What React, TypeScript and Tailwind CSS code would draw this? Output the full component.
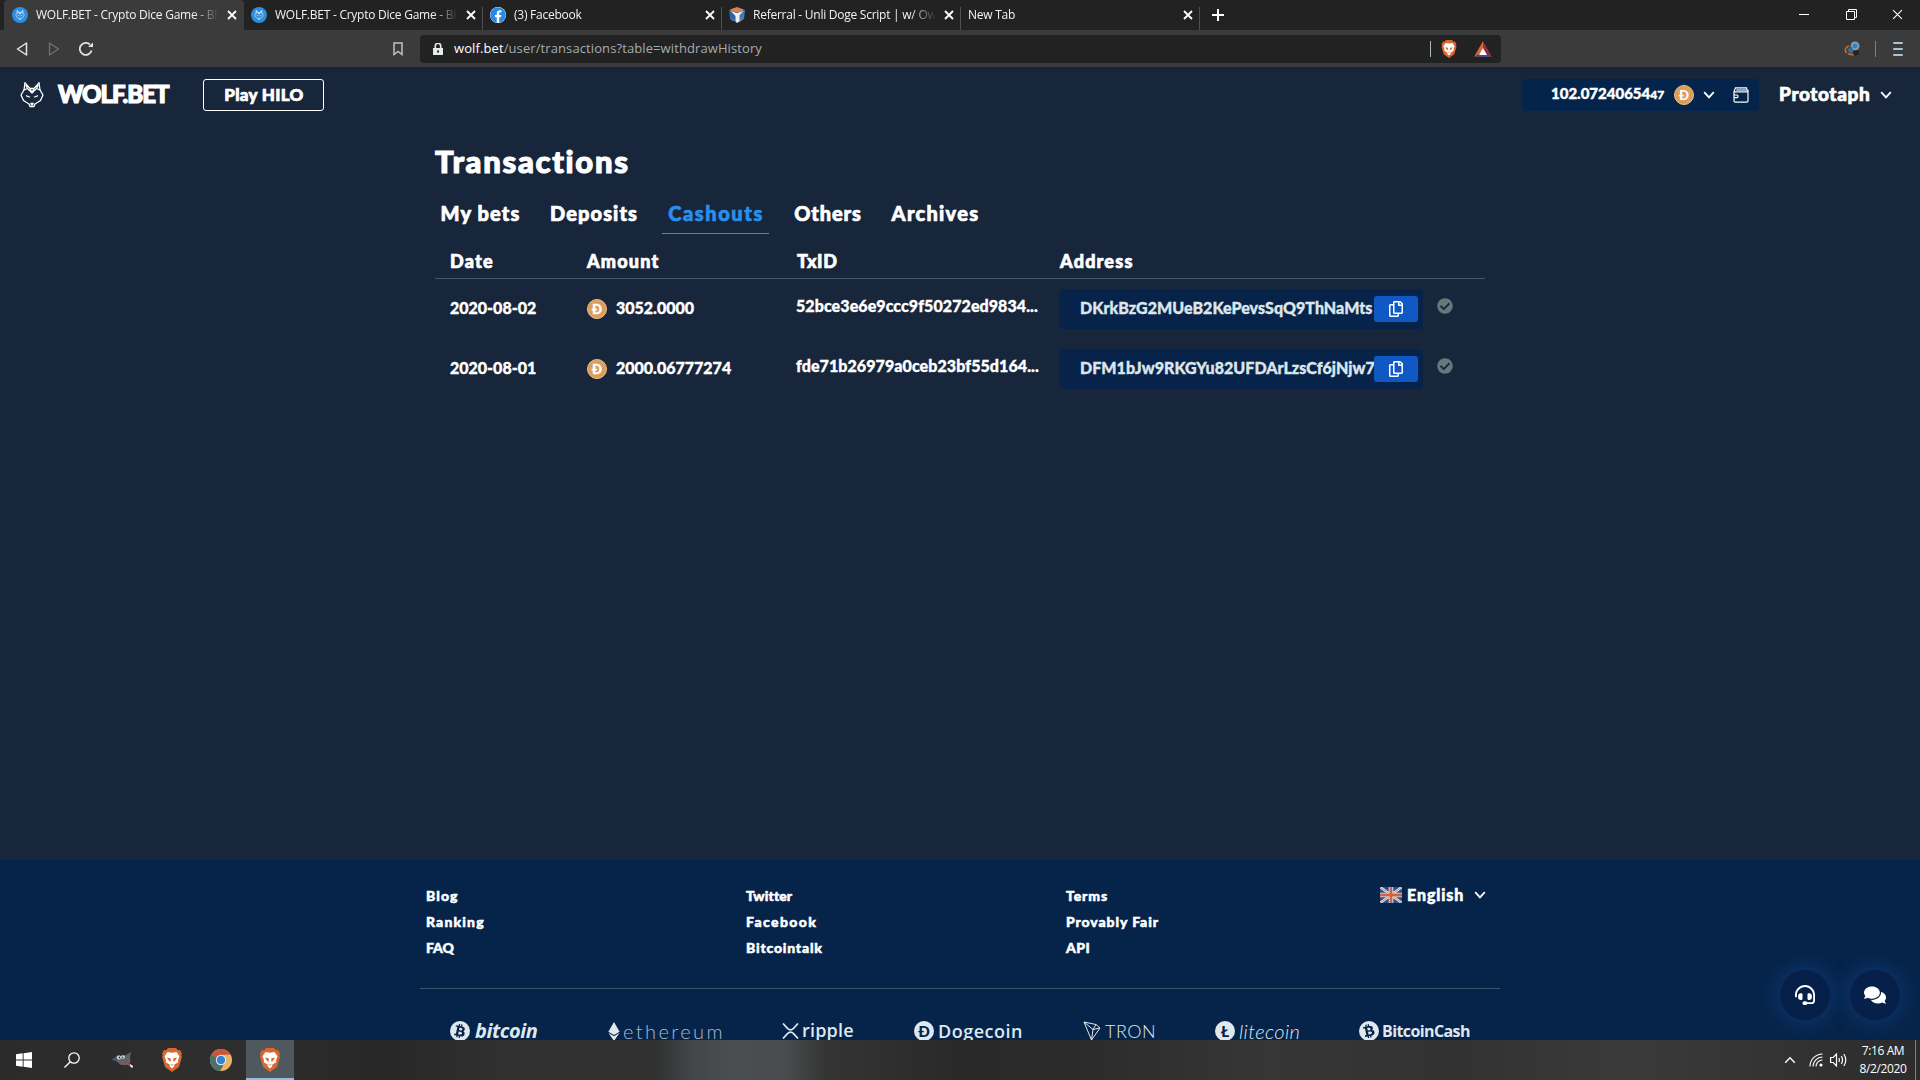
import type { ReactNode } from "react"
import { FaCheckCircle, FaComments, FaEthereum, FaFacebook, FaRegCopy } from "react-icons/fa"
import { FaBtc, FaHeadset } from "react-icons/fa6"

const tabs = [
  { id: 1, title: "WOLF.BET - Crypto Dice Game - Bi", icon: "wolf", active: true },
  { id: 2, title: "WOLF.BET - Crypto Dice Game - Bi", icon: "wolf" },
  { id: 3, title: "(3) Facebook", icon: "facebook" },
  { id: 4, title: "Referral - Unli Doge Script | w/ Ow", icon: "cube" },
  { id: 5, title: "New Tab", icon: "" },
]

const sections = [
  { label: "My bets", className: "w-[90px] pl-px tracking-[1.1px]" },
  { label: "Deposits", className: "w-[97px] pl-px tracking-[1.1px]" },
  { label: "Cashouts", className: "w-[107px] pl-px tracking-[1.6px] text-[#2a8fec]", active: true },
  { label: "Others", className: "w-[77px] pl-px tracking-[0.9px]" },
  { label: "Archives", className: "w-[98px] pl-px tracking-[1.3px]" },
]

const rows = [
  {
    date: "2020-08-02",
    amount: "3052.0000",
    txid: "52bce3e6e9ccc9f50272ed9834...",
    address: "DKrkBzG2MUeB2KePevsSqQ9ThNaMts",
  },
  {
    date: "2020-08-01",
    amount: "2000.06777274",
    txid: "fde71b26979a0ceb23bf55d164...",
    address: "DFM1bJw9RKGYu82UFDArLzsCf6jNjw7",
  },
]

const footerLinks = [
  [
    { label: "Blog", className: "tracking-[1.1px]" },
    { label: "Ranking", className: "tracking-[1.15px]" },
    { label: "FAQ", className: "" },
  ],
  [
    { label: "Twitter", className: "tracking-[0.1px]" },
    { label: "Facebook", className: "tracking-[1.4px]" },
    { label: "Bitcointalk", className: "tracking-[0.8px]" },
  ],
  [
    { label: "Terms", className: "tracking-[0.9px]" },
    { label: "Provably Fair", className: "tracking-[0.9px]" },
    { label: "API", className: "tracking-[0.4px]" },
  ],
]

function WolfIcon({ className }: { className?: string }) {
  return (
    <svg
      className={className}
      viewBox="0 0 24 26"
      fill="none"
      stroke="currentColor"
      strokeWidth="1.3"
      strokeLinejoin="round"
      strokeLinecap="round"
    >
      <path d="M5 1 4 8 1 13l2.500 5.500L9 22l1 2.500h4l1-2.500 5.500-3.500L23 13l-3-5-1-7" />
      <path d="m5 1 5 5.500h4L19 1M4 8l3.500-1.500L12 11l4.500-4.500L20 8M6 3.500l1.500 3M18 3.500l-1.500 3M10 6.500l2 4.500 2-4.500" />
      <path d="m6.500 13.800 3 1.200M17.500 13.800l-3 1.200M10.800 21.500h2.400L12 23z" />
    </svg>
  )
}

function WolfBadge() {
  return (
    <span className="flex size-4 shrink-0 items-center justify-center rounded-full bg-[#2b8ee0] text-white">
      <WolfIcon className="size-2.5" />
    </span>
  )
}

function CubeIcon() {
  return (
    <svg className="size-4 shrink-0" viewBox="0 0 16 16">
      <path d="M0 3 8 0l8 3-8 3z" fill="#d9825a" />
      <path d="M0 3l8 3v10l-7-4z" fill="#2c62a8" />
      <path d="M16 3 8 6v10l7-4z" fill="#3d7cc4" />
      <path d="M1.500 3.800 8 6.200l6.500-2.400-4 4.500V14L8 16l-1.500-2V9z" fill="#f0f0f0" />
      <path d="M3 2l3-1 4 1.500-3 1zM1 11l4 2.500L4 14zM15 11l-5 3v1.500z" fill="#d9825a" />
    </svg>
  )
}

function BraveIcon({ className }: { className?: string }) {
  return (
    <svg className={className} viewBox="0 0 20 24">
      <path d="M6 0h8l2 2.300 2-.3 2 3.500-.7 2L20 9l-3 10-7 5-7-5L0 9l.7-1.500L0 5.500 2 2l2 .3z" fill="#d9652f" />
      <path
        d="m5.500 4 4.500.8 4.500-.8 3 4.300-1.500 4 .3 2-3.800 2.200-.5.800.5.700L10 20.500 7.500 18l.5-.7-.5-.8-3.800-2.200.3-2-1.500-4z"
        fill="#fff"
      />
      <path d="M5 9.500l3.500.7.4 2.500-.9 1-1.500-1.700zM15 9.500l-3.500.7-.4 2.500.9 1 1.500-1.700zM8 16l2 .8 2-.8-2 1.800z" fill="#d9652f" />
    </svg>
  )
}

function ChromeIcon() {
  return (
    <svg className="size-[22px]" viewBox="0 0 22 22">
      <circle cx="11" cy="11" r="11" fill="#e9b463" />
      <path d="M11 11 1.500 5.500A11 11 0 0 1 20.500 5.500L11 6z" fill="#c9573a" />
      <path d="M1.500 5.500A11 11 0 0 0 10 22l5-8.500L11 11z" fill="#4b6f6b" />
      <circle cx="11" cy="11" r="5.200" fill="#eee" />
      <circle cx="11" cy="11" r="4.200" fill="#2d85d8" />
    </svg>
  )
}

function GimpIcon() {
  return (
    <svg className="h-4 w-[22px]" viewBox="0 0 22 16">
      <path d="M3 5l3-2 4 1 4-1 5-3-1 6 .5 4-3.500 3H9L4 9z" fill="#5f6467" />
      <path d="M0 7l4-2 2 3-4 1z" fill="#3f6074" />
      <circle cx="7" cy="5.500" r="2" fill="#e8eef0" />
      <circle cx="11" cy="5" r="1.800" fill="#e8eef0" />
      <circle cx="7.400" cy="5.500" r=".9" fill="#222" />
      <circle cx="10.800" cy="5.200" r=".8" fill="#222" />
      <path d="M9 10l8 1 4 3-2 1-4-2.500-6-1z" fill="#a44a4a" />
      <path d="M18 12l3 2-.5 2-2-1z" fill="#e8eef0" />
    </svg>
  )
}

function Chevron({ className }: { className?: string }) {
  return (
    <svg className={className} viewBox="0 0 12 8" fill="none" stroke="currentColor">
      <path d="M1.200 1.200 6 6.300l4.800-5.100" />
    </svg>
  )
}

function CloseIcon({ className }: { className?: string }) {
  return (
    <svg className={className} viewBox="0 0 10 10" fill="none" stroke="currentColor">
      <path d="m1 1 8 8M9 1 1 9" />
    </svg>
  )
}

function DogeCoin() {
  return (
    <span className="flex size-5 shrink-0 items-center justify-center rounded-full border border-[#f0c08c] bg-[#dc9c5a] text-[13px] font-black leading-none text-white">
      Ð
    </span>
  )
}

function UkFlag() {
  return (
    <svg className="h-4 w-[22px]" viewBox="0 0 22 16">
      <path d="M0 0h22v16H0z" fill="#1f4f9c" />
      <path d="m0 0 22 16M22 0 0 16" stroke="#e8e8e8" strokeWidth="2.600" />
      <path d="m0 0 22 16M22 0 0 16" stroke="#d0623f" strokeWidth=".8" />
      <path d="M11 0v16M0 8h22" stroke="#e8e8e8" strokeWidth="4.600" />
      <path d="M11 0v16M0 8h22" stroke="#d0623f" strokeWidth="2.800" />
    </svg>
  )
}

function TabStrip() {
  return (
    <div className="flex h-[30px] shrink-0 bg-[#222222] pl-1">
      {tabs.map((tab) => (
        <div
          key={tab.id}
          className={tab.active ? "flex w-[240px] rounded-t bg-[#3b3b3b] pl-px" : "flex w-[239px]"}
        >
          <div className="flex min-w-0 flex-1 items-center gap-2 pl-[7px] pr-1.5">
            {tab.icon === "wolf" && <WolfBadge />}
            {tab.icon === "facebook" && <FaFacebook className="size-4 shrink-0 rounded-full bg-white text-[#2489e8]" />}
            {tab.icon === "cube" && <CubeIcon />}
            <span className="min-w-0 flex-1 whitespace-nowrap font-['Open_Sans',sans-serif] text-[12px] tracking-[-0.25px] text-[#f2f2f2] [mask-image:linear-gradient(90deg,#000_86%,transparent_100%)]">
              {tab.title}
            </span>
            <CloseIcon className="size-2.5 shrink-0 stroke-[1.8] text-white" />
          </div>
          <div className={tab.active ? "w-px" : "h-[23px] w-px self-end bg-[#505050]"} />
        </div>
      ))}
      <svg className="ml-3 mt-[9px] size-3 text-white" viewBox="0 0 12 12" stroke="currentColor" strokeWidth="2">
        <path d="M6 0v12M0 6h12" />
      </svg>
      <div className="ml-auto flex items-center gap-9 pb-0.5 pr-[17px] text-white">
        <div className="mr-px h-px w-2.5 bg-white" />
        <svg className="size-[11px]" viewBox="0 0 11 11" fill="none" stroke="currentColor">
          <path d="M.5 2.500h8v8h-8zM2.500 2.500v-2h8v8h-2" />
        </svg>
        <CloseIcon className="-ml-px size-[11px]" />
      </div>
    </div>
  )
}

function Toolbar() {
  return (
    <div className="flex h-[37px] shrink-0 items-center bg-[#3b3b3b] text-[#dfe6e8]">
      <svg className="ml-4 h-[14px] w-3" viewBox="0 0 12 14" fill="none" stroke="currentColor" strokeWidth="1.500" strokeLinejoin="round">
        <path d="M10.500 1v12L1.500 7z" />
      </svg>
      <svg className="ml-5 h-[14px] w-3 text-[#6c7472]" viewBox="0 0 12 14" fill="none" stroke="currentColor" strokeWidth="1.300" strokeLinejoin="round">
        <path d="M1.500 1v12l9-6z" />
      </svg>
      <svg className="ml-[19px] size-[14px]" viewBox="0 0 14 14" fill="none" stroke="currentColor" strokeWidth="1.800">
        <path d="M12.600 8.500A6 6 0 1 1 11 2.600" />
        <path d="M9 5h5V.500z" fill="currentColor" stroke="none" />
      </svg>
      <svg className="ml-[300px] h-[14px] w-2.5 text-[#b4c6ce]" viewBox="0 0 10 14" fill="none" stroke="currentColor" strokeWidth="1.500">
        <path d="M1 1h8v11.500L5 9.500l-4 3z" />
      </svg>
      <div className="ml-[17px] flex h-7 w-[1081px] items-center rounded bg-[#222222] pl-3 font-['Open_Sans',sans-serif]">
        <svg className="ml-px h-3 w-2.5" viewBox="0 0 10 12">
          <path d="M0 5h10v7H0z" fill="#e6ecee" />
          <path d="M2.300 5V3a2.700 2.700 0 0 1 5.400 0v2" fill="none" stroke="#e6ecee" strokeWidth="1.600" />
          <path d="M4 7.500h2v2H4z" fill="#222" />
        </svg>
        <span className="ml-[11px] text-[13px] tracking-[0.1px] text-[#a4acb0]">
          <span className="text-white">wolf.bet</span>/user/transactions?table=withdrawHistory
        </span>
        <div className="ml-auto h-4 w-px bg-[#a9bdc8]" />
        <BraveIcon className="ml-[10px] h-[18px] w-4" />
        <svg className="ml-[17px] mr-[9px] h-4 w-[18px]" viewBox="0 0 18 16">
          <path d="M9 0 0 16l9-5z" fill="#d9652f" />
          <path d="M9 0v11l9 5z" fill="#8f2f45" />
          <path d="M0 16l9-5 9 5z" fill="#4b4a86" />
          <path d="M9 7l4 7H5z" fill="#fff" />
        </svg>
      </div>
      <svg className="ml-auto h-4 w-[17px]" viewBox="0 0 17 16">
        <circle cx="11" cy="5" r="4.500" fill="#7f9bb4" />
        <circle cx="11" cy="5" r="2.200" fill="#2f7fc4" />
        <path d="M5 5c-4 1-5 5-2 7M4 13l6 1" fill="none" stroke="#c96b3a" strokeWidth="1.500" />
        <path d="M3 8l5-2 2 5-4 2z" fill="#3a6a94" />
        <path d="M9 10l6-1v4l-5 2z" fill="#222" />
      </svg>
      <div className="ml-[14px] h-4 w-px bg-[#6f8885]" />
      <div className="ml-[17px] mr-[17px] flex flex-col gap-1">
        <div className="h-0.5 w-2.5 rounded bg-[#a9c3d0]" />
        <div className="h-0.5 w-2.5 rounded bg-[#a9c3d0]" />
        <div className="h-0.5 w-2.5 rounded bg-[#a9c3d0]" />
      </div>
    </div>
  )
}

function SiteHeader() {
  return (
    <header className="flex h-14 shrink-0 items-center font-black [-webkit-text-stroke:0.7px_currentColor]">
      <WolfIcon className="ml-5 h-[26px] w-6" />
      <span className="ml-3.5 w-[113px] pb-0.5 text-[24px] leading-none tracking-[-1px] [-webkit-text-stroke:1.2px_currentColor]">
        WOLF.BET
      </span>
      <button className="ml-8 h-8 w-[121px] rounded-[3px] border border-white pb-px pl-px text-[17px] leading-none tracking-[0.3px]">
        Play HILO
      </button>
      <div className="ml-auto flex h-8 w-[237px] items-center rounded-sm bg-[#05244c] pl-[29px]">
        <span className="w-[113px] whitespace-nowrap pb-[3px] text-[15px] leading-none [-webkit-text-stroke:0.4px_currentColor]">
          102.07240654<span className="text-[12px]">47</span>
        </span>
        <span className="ml-[10px] [-webkit-text-stroke:0px]">
          <DogeCoin />
        </span>
        <Chevron className="ml-[9px] h-2 w-3 stroke-[1.9]" />
        <svg className="ml-[18px] h-4 w-4" viewBox="0 0 16 16" fill="none" stroke="currentColor" strokeWidth="1.200">
          <path d="M2.500.8h11l.5 2.500h1v10.500q0 1.400-1.400 1.400H2.400Q1 15.200 1 13.800V4.500zM1 4.800h14M1 8h3q1 0 1 1.300T4 10.600H1" />
          <path d="M3.500 1.500h9.500v2.800H3z" fill="#8fa5bd" stroke="none" />
        </svg>
      </div>
      <span className="ml-5 w-[92px] pb-[3px] text-[19px] leading-none tracking-[0.6px]">Prototaph</span>
      <Chevron className="ml-[9px] mr-7 h-2 w-3 stroke-[1.9]" />
    </header>
  )
}

function Transactions() {
  return (
    <main className="mx-auto w-[1050px] flex-1 pt-[18px] font-black [-webkit-text-stroke:0.7px_currentColor]">
      <h1 className="text-[31px] leading-10 tracking-[1.7px] [-webkit-text-stroke:1.1px_currentColor]">Transactions</h1>
      <nav className="mt-3 flex h-[41px] gap-5 text-[20px] leading-10">
        {sections.map((section) => (
          <a key={section.label} className={`whitespace-nowrap text-center ${section.className}`}>
            {section.label}
            {section.active && <span className="-ml-px block h-px bg-[#2a8fec]" />}
          </a>
        ))}
      </nav>
      <div className="grid h-[45px] grid-cols-[151px_210px_263px_364px_1fr] items-center border-b border-[#46566d] pt-[9px] text-[18px] leading-none tracking-[1.2px]">
        <span className="pl-[15px]">Date</span>
        <span className="pl-px">Amount</span>
        <span className="pl-px tracking-[0.6px]">TxID</span>
        <span className="pl-px">Address</span>
      </div>
      {rows.map((row) => (
        <div
          key={row.txid}
          className="grid h-[60px] grid-cols-[151px_210px_263px_364px_1fr] items-center text-[16px] leading-none [-webkit-text-stroke:0.35px_currentColor]"
        >
          <span className="pb-0.5 pl-[15px]">{row.date}</span>
          <span className="flex items-center gap-[9px] pl-px">
            <DogeCoin />
            <span className="pb-0.5">{row.amount}</span>
          </span>
          <span className="pb-1.5 tracking-[0.08px]">{row.txid}</span>
          <div className="flex h-10 items-center rounded-sm bg-[#08234a] pl-[21px]">
            <span className="w-[294px] whitespace-nowrap pb-0.5 leading-5 tracking-[0.05px] text-[#dde6ea]">
              {row.address}
            </span>
            <button className="flex h-[26px] w-11 items-center justify-center rounded-[3px] bg-[#1058c4]">
              <FaRegCopy className="size-4" />
            </button>
          </div>
          <span className="pb-1.5 pl-[14px]">
            <FaCheckCircle className="size-4 text-[#637a7a]" />
          </span>
        </div>
      ))}
    </main>
  )
}

function CoinLogo({ className, children }: { className: string; children: ReactNode }) {
  return <div className={`flex h-[22px] items-center whitespace-nowrap leading-none ${className}`}>{children}</div>
}

function CoinMark({ children }: { children: ReactNode }) {
  return (
    <span className="flex size-5 shrink-0 items-center justify-center rounded-full bg-[#dfe8ec] text-[15px] font-black text-[#06244a]">
      {children}
    </span>
  )
}

function Footer() {
  return (
    <footer className="h-[180px] shrink-0 overflow-hidden bg-[#06244a]">
      <div className="mx-auto w-[1080px]">
        <div className="flex h-[129px] border-b border-[#3c516b] pt-[23px] text-[14px] font-black leading-[26px] [-webkit-text-stroke:0.5px_currentColor]">
          {footerLinks.map((links) => (
            <ul key={links[0].label} className="w-80 pl-1.5">
              {links.map((link) => (
                <li key={link.label} className={link.className}>
                  {link.label}
                </li>
              ))}
            </ul>
          ))}
          <div className="-mt-px flex h-[26px] items-center text-[16px]">
            <UkFlag />
            <span className="ml-[5px] w-[58px] tracking-[0.9px]">English</span>
            <Chevron className="ml-[9px] h-2 w-3 stroke-[1.9]" />
          </div>
        </div>
        <div className="flex pl-[30px] pt-[31px] text-[#dfe8ec]">
          <CoinLogo className="w-[158px] gap-[5px]">
            <CoinMark>
              <FaBtc className="size-3.5 rotate-12" />
            </CoinMark>
            <span className="font-['Open_Sans',sans-serif] text-[20px] font-bold italic tracking-[-0.45px]">bitcoin</span>
          </CoinLogo>
          <CoinLogo className="w-[174px] gap-[3px]">
            <FaEthereum className="h-[19px] w-3" />
            <span className="text-[20px] font-light tracking-[2.400px] text-[#a9b9c8]">ethereum</span>
          </CoinLogo>
          <CoinLogo className="w-[132px] gap-[3px]">
            <svg className="h-4 w-[17px]" viewBox="0 0 17 16" fill="none" stroke="currentColor" strokeWidth="1.700">
              <path d="M1 .5l4.500 4.800q3 3 6 0L16 .5M1 15.500l4.500-4.800q3-3 6 0l4.500 4.800" />
            </svg>
            <span className="pb-0.5 font-['Open_Sans',sans-serif] text-[18px] font-semibold tracking-[0.2px]">ripple</span>
          </CoinLogo>
          <CoinLogo className="w-[169px] gap-1">
            <CoinMark>Ð</CoinMark>
            <span className="font-['Open_Sans',sans-serif] text-[18px] font-semibold tracking-[0.5px]">Dogecoin</span>
          </CoinLogo>
          <CoinLogo className="w-[132px] gap-1">
            <svg className="h-5 w-[18px]" viewBox="0 0 18 20" fill="none" stroke="currentColor" strokeLinejoin="round">
              <path d="M1 1l12 2.500L17 7 8.500 19zM1 1l9 7.500L8.500 19M10 8.500 17 7M10 8.500l3-5" />
            </svg>
            <span className="text-[18px] font-light tracking-[0.5px]">TRON</span>
          </CoinLogo>
          <CoinLogo className="w-36 gap-1">
            <CoinMark>Ł</CoinMark>
            <span className="text-[20px] font-light italic tracking-[0.4px]">litecoin</span>
          </CoinLogo>
          <CoinLogo className="gap-[3px]">
            <CoinMark>
              <FaBtc className="size-3.5 -rotate-12" />
            </CoinMark>
            <span className="font-['Open_Sans',sans-serif] text-[16px] font-bold tracking-[-0.6px]">BitcoinCash</span>
          </CoinLogo>
        </div>
      </div>
    </footer>
  )
}

function Taskbar() {
  return (
    <div className="flex h-10 shrink-0 items-center bg-[linear-gradient(90deg,#2b2b2b_0%,#2e2e2e_12%,#272727_20%,#303030_26%,#303030_34%,#434647_36%,#4b4e4f_38%,#494b4c_41%,#343434_43%,#292929_50%,#2b2b2b_56%,#363636_66%,#323232_76%,#3a3a3a_85%,#2c2c2c_100%)] text-white">
      <svg className="ml-4 size-4" viewBox="0 0 16 16" fill="currentColor">
        <path d="M0 2.300 6.700 1.300v6.300H0zM7.600 1.200 16 0v7.600H7.600zM0 8.500h6.700v6.300L0 13.800zM7.600 8.500H16V16l-8.400-1.200z" />
      </svg>
      <svg className="ml-8 size-4" viewBox="0 0 16 16" fill="none" stroke="currentColor" strokeWidth="1.300">
        <circle cx="10" cy="6" r="5.200" />
        <path d="M6.300 9.700.5 15.500" />
      </svg>
      <div className="ml-8">
        <GimpIcon />
      </div>
      <BraveIcon className="ml-7 h-6 w-5" />
      <div className="ml-7">
        <ChromeIcon />
      </div>
      <div className="ml-[14px] flex h-full w-12 items-center justify-center border-b-2 border-[#9db9dd] bg-[#4f585c]">
        <BraveIcon className="mt-0.5 h-6 w-5" />
      </div>
      <Chevron className="ml-auto h-2 w-3 rotate-180 stroke-[1.3]" />
      <svg className="ml-[13px] h-[14px] w-[14px]" viewBox="0 0 14 14" fill="none" stroke="currentColor" strokeWidth="1.100">
        <path d="M1 13.500A12.500 12.500 0 0 1 13.500 1M4 13.500A9.500 9.500 0 0 1 13.500 4M7 13.500A6.500 6.500 0 0 1 13.500 7" />
        <circle cx="12" cy="12" r="1.600" fill="currentColor" stroke="none" />
      </svg>
      <svg className="ml-[7px] h-[14px] w-[17px]" viewBox="0 0 17 14" fill="none" stroke="currentColor" strokeWidth="1.200">
        <path d="M.6 4.500h2.600L6.500 1v12L3.200 9.500H.6zM8.800 5q1.200 2 0 4M11.300 3.200q2.500 3.800 0 7.600M13.800 1q4 6 0 12" />
      </svg>
      <div className="ml-3 w-[48px] whitespace-nowrap text-center font-['Open_Sans',sans-serif] text-[12px] leading-[18px] tracking-[-0.4px]">
        <div>7:16 AM</div>
        <div>8/2/2020</div>
      </div>
      <div className="ml-2 mr-1 h-full w-px bg-[#6f8885]" />
    </div>
  )
}

export default function App() {
  return (
    <div className="relative flex h-screen w-full flex-col overflow-hidden bg-[#18263b] font-[Lato,sans-serif] text-white">
      <TabStrip />
      <Toolbar />
      <SiteHeader />
      <Transactions />
      <Footer />
      <Taskbar />
      {/* floating support and chat buttons */}
      <div className="absolute bottom-[60px] right-5 flex gap-5">
        <button className="flex size-[50px] items-center justify-center rounded-full bg-[#06204a] shadow-[0_0_16px_6px_#0d3164]">
          <FaHeadset className="size-5" />
        </button>
        <button className="flex size-[50px] items-center justify-center rounded-full bg-[#06204a] shadow-[0_0_16px_6px_#0d3164]">
          <FaComments className="size-[22px]" />
        </button>
      </div>
    </div>
  )
}
